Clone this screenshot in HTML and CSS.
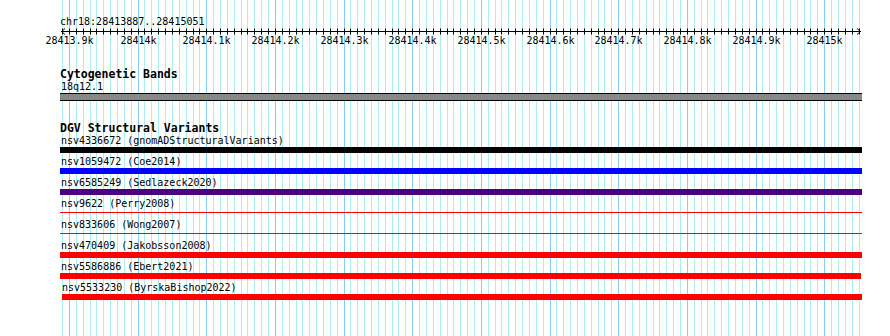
FILE: index.html
```html
<!DOCTYPE html>
<html lang="en">
<head>
    <meta charset="UTF-8">
    <title>chr18:28413887..28415051</title>
    <link rel="stylesheet" href="styles.css">
</head>
<body>

<div class="browser">
    <!-- grid lines every 10bp, drawn behind everything -->
    <svg class="gridlines" id="gridlines" width="890" height="336"></svg>

    <div class="content">
        <div class="ruler">
            <div class="location">chr18:28413887..28415051</div>
            <svg class="scale" id="scale" width="890" height="20"></svg>
        </div>

        <section class="track">
            <h2 class="track-label">Cytogenetic Bands</h2>
            <div class="feature">
                <div class="feature-name">18q12.1</div>
                <div class="band"></div>
            </div>
        </section>

        <section class="track track-dgv">
            <h2 class="track-label">DGV Structural Variants</h2>
            <div class="feature">
                <div class="feature-name">nsv4336672 (gnomADStructuralVariants)</div>
                <div class="feature-bar bar-black"></div>
            </div>
            <div class="feature">
                <div class="feature-name">nsv1059472 (Coe2014)</div>
                <div class="feature-bar bar-blue"></div>
            </div>
            <div class="feature">
                <div class="feature-name">nsv6585249 (Sedlazeck2020)</div>
                <div class="feature-bar bar-purple"></div>
            </div>
            <div class="feature">
                <div class="feature-name">nsv9622 (Perry2008)</div>
                <div class="feature-line"></div>
            </div>
            <div class="feature">
                <div class="feature-name">nsv833606 (Wong2007)</div>
                <div class="feature-line"></div>
            </div>
            <div class="feature">
                <div class="feature-name">nsv470409 (Jakobsson2008)</div>
                <div class="feature-bar bar-red"></div>
            </div>
            <div class="feature">
                <div class="feature-name">nsv5586886 (Ebert2021)</div>
                <div class="feature-bar bar-red short"></div>
            </div>
            <div class="feature shifted">
                <div class="feature-name">nsv5533230 (ByrskaBishop2022)</div>
                <div class="feature-bar bar-red"></div>
            </div>
        </section>
    </div>
</div>

<script src="script.js"></script>
</body>
</html>
```

FILE: styles.css
```css
body {
    margin: 0;
    background: #fff;
    color: #000;
    font-family: "DejaVu Sans Mono", "Liberation Mono", monospace;
    font-size: 10px;
}

.browser {
    position: relative;
    width: 890px;
    height: 336px;
    overflow: hidden;
}

.gridlines {
    position: absolute;
    top: 0;
    left: 0;
}

.gridlines line {
    stroke: #afeeee;
    stroke-width: 1;
}

.gridlines line.major {
    stroke: #87cefa;
}

.content {
    position: relative;
}

.location {
    padding: 16px 0 0 60px;
    line-height: 12px;
}

.scale {
    display: block;
}

.scale line,
.scale polyline {
    stroke: #000;
    stroke-width: 1;
    fill: none;
}

.scale text {
    font-family: "DejaVu Sans Mono", "Liberation Mono", monospace;
    font-size: 10px;
    fill: #000;
}

.track-label {
    margin: 20px 0 0 60px;
    padding-top: 1px;
    font-size: 11.5px;
    font-weight: bold;
    line-height: 11px;
}

.track-dgv .track-label {
    margin-top: 21px;
}

.feature {
    padding-left: 60px;
}

.feature-name {
    padding: 1px 0 0 1px;
    line-height: 12px;
}

.band {
    width: 802px;
    height: 6px;
    background: #888;
    border-top: 1px solid #000;
    border-bottom: 1px solid #000;
}

.feature-bar {
    width: 802px;
    height: 6px;
    margin-bottom: 2px;
}

.feature-line {
    width: 802px;
    height: 1px;
    margin: 2px 0 5px;
    background: #f00;
}

.bar-black { background: #000; }
.bar-blue { background: #00f; }
.bar-purple { background: #4b0082; }
.bar-red { background: #f00; }

.feature-bar.short {
    width: 801px;
}

.feature.shifted {
    padding-left: 62px;
}

.feature.shifted .feature-name {
    padding-left: 0;
}

.feature.shifted .feature-bar {
    width: 800px;
}
```

FILE: script.js
```js
var start = 28413887;
var end = 28415051;
var left = 60;
var pxPerBp = 0.6866;
var svgNS = "http://www.w3.org/2000/svg";

function xOf(bp) {
    return Math.round(left + (bp - start) * pxPerBp) + 0.5;
}

function el(name, attrs) {
    var node = document.createElementNS(svgNS, name);
    for (var key in attrs) {
        node.setAttribute(key, attrs[key]);
    }
    return node;
}

var grid = document.getElementById("gridlines");
var scale = document.getElementById("scale");

// axis with arrows on both ends
scale.appendChild(el("line", { x1: 61, y1: 3.5, x2: 861, y2: 3.5 }));
scale.appendChild(el("polyline", { points: "65,0.5 61.5,3.5 65,6.5" }));
scale.appendChild(el("polyline", { points: "857,0.5 860.5,3.5 857,6.5" }));

for (var bp = Math.ceil(start / 10) * 10; bp <= end; bp += 10) {
    var x = xOf(bp);
    var major = bp % 100 === 0;

    grid.appendChild(el("line", {
        x1: x, y1: 0, x2: x, y2: 336,
        "class": major ? "major" : ""
    }));

    scale.appendChild(el("line", { x1: x, y1: 0.5, x2: x, y2: 6.5 }));

    if (major) {
        var label = el("text", { x: x, y: 16, "text-anchor": "middle" });
        label.textContent = (Math.round(bp / 100) / 10) + "k";
        scale.appendChild(label);
    }
}
```
